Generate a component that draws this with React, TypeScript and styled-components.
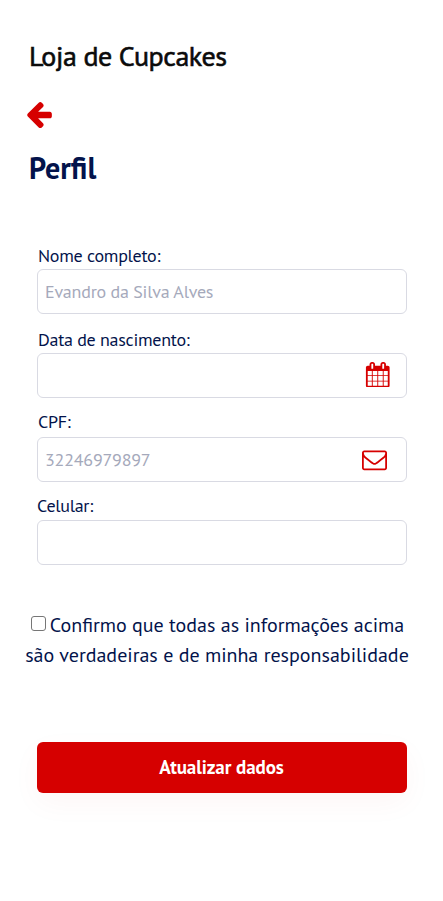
import React from "react";
import styled, { createGlobalStyle } from "styled-components";

const red = "#d60000";
const navy = "#03134b";

const GlobalStyle = createGlobalStyle`
  *, *::before, *::after { box-sizing: border-box; }
  body { margin: 0; background: #fff; font-family: "PT Sans", Lato, sans-serif; color: ${navy}; }
`;

const Page = styled.main`
  width: 443px;
  height: 901px;
  overflow: hidden;
  background: #fff;
`;

const Brand = styled.h1`
  margin: 0;
  padding: 38px 0 0 29px;
  font: 400 28px/36px "PT Sans", "Open Sans", sans-serif;
  letter-spacing: -0.45px;
  -webkit-text-stroke: 0.6px currentColor;
  white-space: nowrap;
  color: #0b0b0b;
`;

const BackButton = styled.button`
  display: block;
  margin: 24px 0 0 24px;
  padding: 0;
  border: 0;
  background: none;
  width: 30px;
  height: 32px;
  color: ${red};
`;

const Icon = styled.svg<{ $size: number; $lift: number }>`
  display: block;
  flex: none;
  width: ${(p) => p.$size}px;
  height: ${(p) => p.$size}px;
  margin-bottom: ${(p) => p.$lift}px;
  fill: currentColor;
`;

const Title = styled.h2`
  margin: 20px 0 0 29px;
  font: 700 30px/36px "PT Sans", "Noto Sans", sans-serif;
`;

const Form = styled.form`
  display: flex;
  flex-direction: column;
  padding: 58px 36px 0 37px;
`;

const Field = styled.div<{ $height: number }>`
  display: flex;
  flex-direction: column;
  justify-content: flex-end;
  height: ${(p) => p.$height}px;
`;

const Label = styled.label<{ $indent: number; $gap: number }>`
  padding-left: ${(p) => p.$indent}px;
  margin-bottom: ${(p) => p.$gap}px;
  font-size: 18px;
  line-height: 24px;
  letter-spacing: -0.27px;
`;

const Control = styled.div<{ $inset: number }>`
  display: flex;
  align-items: center;
  height: 45px;
  padding: 0 ${(p) => p.$inset}px 0 7px;
  border: 1px solid #d9dae3;
  border-radius: 6px;
  color: ${red};
`;

const Input = styled.input`
  flex: 1;
  min-width: 0;
  height: 100%;
  padding: 0;
  border: 0;
  outline: 0;
  background: transparent;
  font: 18px "PT Sans", Lato, sans-serif;
  letter-spacing: -0.23px;
  &::placeholder { color: #a5a9bb; opacity: 1; }
`;

const Consent = styled.label`
  margin: 45px -8px 0 -18px;
  font-size: 20px;
  line-height: 30px;
  text-align: center;
`;

const ConsentLine = styled.span`
  display: flex;
  justify-content: center;
  align-items: center;
  white-space: nowrap;
`;

const Checkbox = styled.input`
  appearance: none;
  width: 15px;
  height: 15px;
  margin: 0 4px 4px 1px;
  border: 1px solid #767676;
  border-radius: 3px;
  background: #fff;
`;

const Submit = styled.button`
  height: 51px;
  margin-top: 72px;
  padding: 0 1px 1px 0;
  border: 0;
  border-radius: 6px;
  background: ${red};
  color: #fff;
  font: 700 19px "PT Sans", Lato, sans-serif;
  letter-spacing: -0.08px;
  box-shadow: 0 10px 30px rgba(214, 0, 0, 0.04);
`;

const arrowLeft =
  "M1664 896v128q0 53-32.5 90.5t-84.5 37.5h-704l293 294q38 36 38 90t-38 90l-75 76q-37 37-90 37-52 0-91-37l-651-652q-37-37-37-90 0-52 37-91l651-650q38-38 91-38 52 0 90 38l75 74q38 38 38 91t-38 91l-293 293h704q52 0 84.5 37.5t32.5 90.5z";
const calendar =
  "M192 1664h288v-288h-288v288zm352 0h320v-288h-320v288zm-352-352h288v-320h-288v320zm352 0h320v-320h-320v320zm-352-384h288v-288h-288v288zm736 736h320v-288h-320v288zm-384-736h320v-288h-320v288zm768 736h288v-288h-288v288zm-384-352h320v-320h-320v320zm-352-864v-288q0-13-9.5-22.5t-22.5-9.5h-64q-13 0-22.5 9.5t-9.5 22.5v288q0 13 9.5 22.5t22.5 9.5h64q13 0 22.5-9.5t9.5-22.5zm736 864h288v-320h-288v320zm-384-384h320v-288h-320v288zm384 0h288v-288h-288v288zm32-480v-288q0-13-9.5-22.5t-22.5-9.5h-64q-13 0-22.5 9.5t-9.5 22.5v288q0 13 9.5 22.5t22.5 9.5h64q13 0 22.5-9.5t9.5-22.5zm384-64v1280q0 52-38 90t-90 38h-1408q-52 0-90-38t-38-90v-1280q0-52 38-90t90-38h128v-96q0-66 47-113t113-47h64q66 0 113 47t47 113v96h384v-96q0-66 47-113t113-47h64q66 0 113 47t47 113v96h128q52 0 90 38t38 90z";
const envelope =
  "M1664 1504v-768q-32 36-69 66-268 206-426 338-51 43-83 67t-86.5 48.5-102.5 24.5h-2q-48 0-102.5-24.5t-86.5-48.5-83-67q-158-132-426-338-37-30-69-66v768q0 13 9.5 22.5t22.5 9.5h1472q13 0 22.5-9.5t9.5-22.5zm0-1051v-24.5l-.5-13-3-12.5-5.5-9-9-7.5-14-2.5h-1472q-13 0-22.5 9.5t-9.5 22.5q0 168 147 284 193 152 401 317 6 5 35 29.5t46 37.5 44.5 31.5 50.5 27.5 43 9h2q20 0 43-9t50.5-27.5 44.5-31.5 46-37.5 35-29.5q208-165 401-317 54-43 100.5-115.5t46.5-131.5zm128-37v1088q0 66-47 113t-113 47h-1472q-66 0-113-47t-47-113v-1088q0-66 47-113t113-47h1472q66 0 113 47t47 113z";

const Glyph = ({ d, size, lift = 0 }: { d: string; size: number; lift?: number }) => (
  <Icon $size={size} $lift={lift} viewBox="0 0 1792 1792" aria-hidden="true">
    <path d={d} />
  </Icon>
);

const fields = [
  { id: "nome", label: "Nome completo:", placeholder: "Evandro da Silva Alves", height: 70, indent: 1, gap: 1 },
  { id: "nascimento", label: "Data de nascimento:", height: 84, indent: 1, gap: 1, inset: 16, icon: calendar, iconSize: 25.5, lift: 2 },
  { id: "cpf", label: "CPF:", placeholder: "32246979897", height: 84, indent: 1, gap: 3, inset: 19, icon: envelope, iconSize: 25, lift: 0 },
  { id: "celular", label: "Celular:", height: 83, indent: 0, gap: 2 },
];

export default function App() {
  return (
    <Page>
      <GlobalStyle />
      <Brand>Loja de Cupcakes</Brand>
      <BackButton aria-label="Voltar">
        <Glyph d={arrowLeft} size={30} />
      </BackButton>
      <Title>Perfil</Title>
      <Form>
        {fields.map((f) => (
          <Field key={f.id} $height={f.height}>
            <Label htmlFor={f.id} $indent={f.indent} $gap={f.gap}>
              {f.label}
            </Label>
            <Control $inset={f.inset ?? 7}>
              <Input id={f.id} placeholder={f.placeholder} />
              {f.icon && <Glyph d={f.icon} size={f.iconSize} lift={f.lift} />}
            </Control>
          </Field>
        ))}
        <Consent>
          <ConsentLine>
            <Checkbox type="checkbox" />
            Confirmo que todas as informações acima
          </ConsentLine>
          <ConsentLine>são verdadeiras e de minha responsabilidade</ConsentLine>
        </Consent>
        <Submit type="button">Atualizar dados</Submit>
      </Form>
    </Page>
  );
}
